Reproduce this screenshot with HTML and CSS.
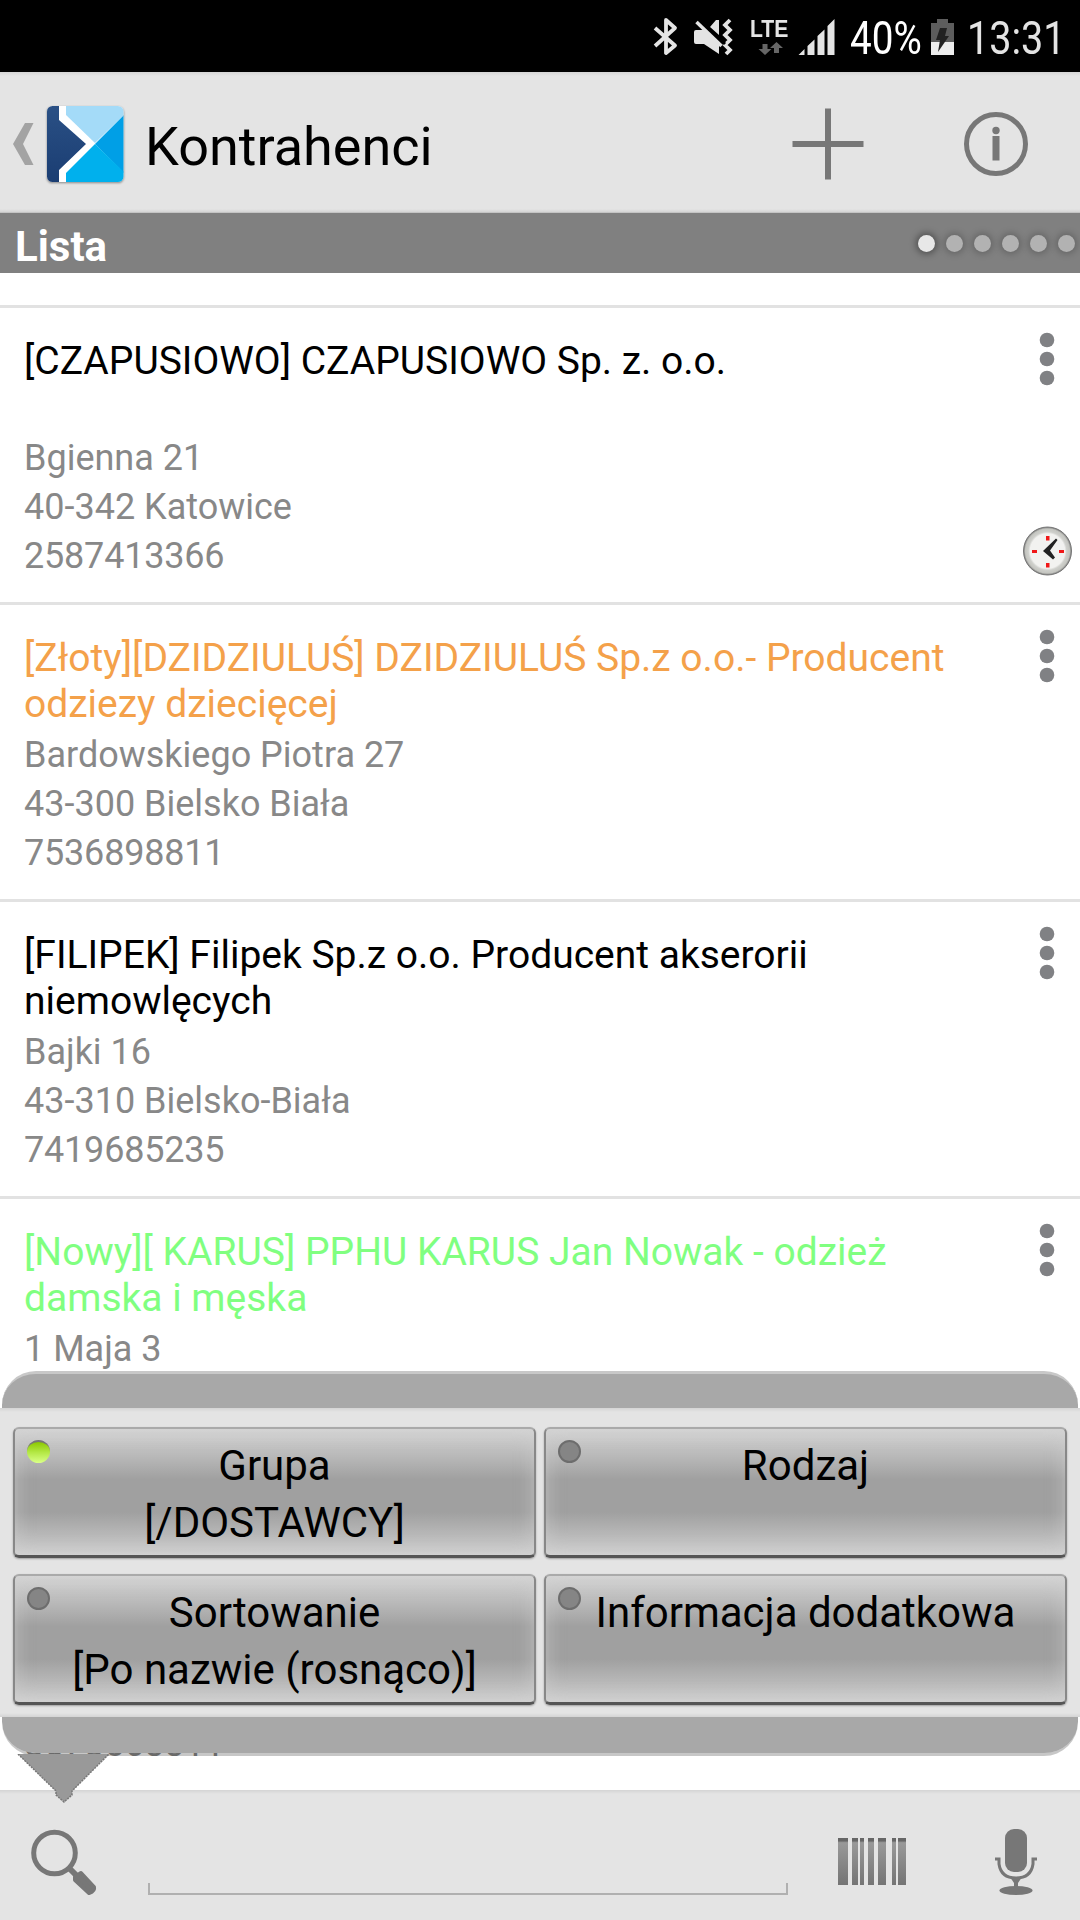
FILE: index.html
```html
<!DOCTYPE html>
<html lang="pl">
<head>
<meta charset="utf-8">
<title>Kontrahenci</title>
<link rel="stylesheet" href="styles.css">
</head>
<body>
<svg class="defs" width="0" height="0">
  <defs>
    <linearGradient id="navy" x1="0" y1="0" x2="0" y2="1"><stop offset="0" stop-color="#2a5085"/><stop offset="1" stop-color="#1a3d72"/></linearGradient>
    <linearGradient id="bar" x1="0" y1="0" x2="0" y2="1"><stop offset="0" stop-color="#666"/><stop offset=".06" stop-color="#666"/><stop offset=".1" stop-color="#999"/><stop offset="1" stop-color="#747474"/></linearGradient>
    <radialGradient id="dial"><stop offset=".72" stop-color="#f2f2f0"/><stop offset=".8" stop-color="#cfd0cc"/><stop offset=".92" stop-color="#c4c5c0"/><stop offset="1" stop-color="#777"/></radialGradient>
    <symbol id="dots" viewBox="0 0 16 54"><g fill="#808184"><circle cx="8" cy="8" r="7.3"/><circle cx="8" cy="27" r="7.3"/><circle cx="8" cy="46" r="7.3"/></g></symbol>
  </defs>
</svg>
<div class="screen">
  <div class="status">
    <svg class="status-icons" width="206" height="72" viewBox="0 0 206 72">
      <path fill="none" stroke="#e4e4e4" stroke-width="3.800" stroke-linejoin="round" d="M5 28 25 45.500 16 53V20L25 28 5 46"/>
      <path fill="none" stroke="#e4e4e4" stroke-width="3.800" d="M80 20l-5 5 5 5-5 5 5 5-5 5 5 5-4 4"/>
      <path fill="#e4e4e4" d="M44 32q0-2 2-2h9l14 12v12L54 44h-8q-2 0-2-2zM60 27l6-7h3v15z"/>
      <path stroke="#000" stroke-width="3" d="M49 19 75 44"/>
      <path stroke="#e4e4e4" stroke-width="3.500" d="M46.500 22 71.500 46"/>
      <path fill="#666" d="M112.500 44h5v5h4l-6.500 6-6.500-6h4zM124 53h5v-5h4l-6.500-6-6.500 6h4z"/>
      <path fill="#e4e4e4" d="M148.500 55l6-6v6zM157.500 46l7-6.500V55h-7zM167.500 36l7-6.500V55h-7zM177.500 26l7-7v36h-7z"/>
    </svg>
    <span class="lte">LTE</span>
    <span class="pct">40%</span>
    <svg class="battery" width="24" height="37" viewBox="0 0 24 37"><path fill="#5d5d5d" d="M0 4h6V0h11v4h6v19H0z"/><path fill="#ededed" d="M0 23h23v13H0z"/><path fill="#222" d="M9 9h7l-2 8h4L7 33l2-12H5z"/></svg>
    <span class="time">13:31</span>
  </div>
  <div class="header">
    <svg class="back" width="22" height="44" viewBox="0 0 22 44"><path fill="#a3a3a3" d="M12 1h8.500L10 22l10.500 21H12L0 22z"/></svg>
    <svg class="logo" width="78" height="78" viewBox="0 0 78 78">
      <clipPath id="tile"><rect width="76.500" height="76" rx="5.500"/></clipPath>
      <g clip-path="url(#tile)"><rect width="78" height="78" fill="#fff"/><path fill="url(#navy)" d="M0 0h12v14l27 24L12 64v14H0z"/><path fill="#a4dbf8" d="M19 0h59v8L48 37 19 9z"/><path fill="#009fe6" d="M77 9v58L48 38z"/><path fill="#00b0ed" d="M48 38 19 67v11h59V67z"/></g>
    </svg>
    <h1 class="title">Kontrahenci</h1>
    <svg class="plus" width="72" height="72" viewBox="0 0 72 72"><path stroke="#777" stroke-width="6" d="M36 .5v71M.5 36h71"/></svg>
    <svg class="info" width="66" height="66" viewBox="0 0 66 66"><circle cx="33" cy="33" r="29.500" fill="none" stroke="#777" stroke-width="5"/><circle cx="33" cy="19.500" r="3.700" fill="#777"/><path fill="#777" d="M29.500 25h7v24.500h-7z"/></svg>
  </div>
  <div class="tabbar"><span class="tab">Lista</span><div class="pager"><i class="on"></i><i></i><i></i><i></i><i></i><i></i></div></div>
  <div class="list">
    <div class="row"><div class="name">[CZAPUSIOWO] CZAPUSIOWO Sp. z. o.o.</div><div class="addr">Bgienna 21<br>40-342 Katowice<br><span class="num">2587413366</span></div><svg class="more" width="16" height="54"><use href="#dots"/></svg>
      <svg class="clock" width="49" height="50" viewBox="0 0 49 50"><circle cx="24.500" cy="25" r="24" fill="url(#dial)" stroke="#777"/><path fill="#f01818" d="M23 10h3.500v4.500H23zM23 37h3.500v4.500H23zM9 24h5v3H9zM36 24h5v3h-5z"/><path fill="#222" d="M20 25 33 12.500l1.500 1.500-7.500 10.500 5 7-2 2z"/></svg></div>
    <div class="row"><div class="name gold">[Złoty][DZIDZIULUŚ] DZIDZIULUŚ Sp.z o.o.- Producent odziezy dziecięcej</div><div class="addr">Bardowskiego Piotra 27<br>43-300 Bielsko Biała<br><span class="num">7536898811</span></div><svg class="more" width="16" height="54"><use href="#dots"/></svg></div>
    <div class="row"><div class="name">[FILIPEK] Filipek Sp.z o.o. Producent akserorii niemowlęcych</div><div class="addr">Bajki 16<br>43-310 Bielsko-Biała<br><span class="num">7419685235</span></div><svg class="more" width="16" height="54"><use href="#dots"/></svg></div>
    <div class="row"><div class="name green">[Nowy][ KARUS] PPHU KARUS Jan Nowak - odzież damska i męska</div><div class="addr">1 Maja 3</div><svg class="more" width="16" height="54"><use href="#dots"/></svg></div>
    <div class="row"><div class="name"></div><div class="addr"><br><br><span class="num">8678568811</span></div></div>
  </div>
  <div class="panel">
    <div class="cap top"></div>
    <div class="buttons">
      <div class="btn"><i class="led lit"></i>Grupa<br>[/DOSTAWCY]</div>
      <div class="btn"><i class="led"></i>Rodzaj</div>
      <div class="btn"><i class="led"></i>Sortowanie<br>[Po nazwie (rosnąco)]</div>
      <div class="btn"><i class="led"></i>Informacja dodatkowa</div>
    </div>
    <div class="cap bottom"></div>
    <svg class="pointer" width="94" height="50" viewBox="0 0 94 50"><path fill="#999" stroke="#777" stroke-width="1.500" stroke-dasharray="2 1" d="M1 0 39 37v4l8 7 8-7v-4L92 0"/></svg>
  </div>
  <div class="search">
    <svg class="lens" width="68" height="68" viewBox="0 0 68 68"><circle cx="23.500" cy="24" r="20.800" fill="none" stroke="#777" stroke-width="5"/><path stroke="#777" stroke-width="6" d="M38 39l8 8"/><path fill="#777" stroke="#777" stroke-width="4" stroke-linejoin="round" d="M44 48l6-4 13 14q1 4-5 6L44 51z"/></svg>
    <div class="field"></div>
    <svg class="barcode" width="70" height="50" viewBox="0 0 70 50"><path fill="url(#bar)" d="M0 1h10v47H0zM14 1h6v47h-6zM22 1h4v47h-4zM30 1h6v47h-6zM40 1h8v47h-8zM54 1h4v47h-4zM60 1h8v47h-8z"/></svg>
    <svg class="mic" width="42" height="68" viewBox="0 0 42 68"><rect x="10" y="0" width="22" height="43" rx="9" fill="#777"/><path fill="none" stroke="#777" stroke-width="3" d="M0 30h4v5q2 14 17 14t17-14v-5h4"/><path fill="#777" d="M15 48h12l-4 6v5h-4v-5z"/><ellipse cx="21" cy="61.500" rx="16.500" ry="4.500" fill="#777"/></svg>
  </div>
</div>
</body>
</html>
```
FILE: styles.css
```css
* { box-sizing: border-box; }
body { margin: 0; font-family: Roboto, sans-serif; background: #fff; color: #000; }
svg { display: block; flex: none; }
.defs { position: absolute; }
.screen { position: relative; width: 1080px; height: 1920px; overflow: hidden; display: flex; flex-direction: column; }
.status { position: relative; height: 72px; flex: none; background: #000; color: #e4e4e4; display: flex; padding-left: 650px; }
.lte { position: absolute; left: 750px; top: 14px; font: bold 23px/30px "Liberation Sans", sans-serif; transform-origin: left; transform: scaleX(.92); }
.status-icons { margin-right: 0; }
.pct, .time { font-size: 46px; line-height: 77px; transform-origin: left; white-space: nowrap; }
.pct { color: #fff; margin-left: -6px; width: 80px; transform: scaleX(.84); }
.battery { margin: 19px 0 0 1px; }
.time { margin-left: 12px; transform: scaleX(.86); }
.header { height: 141px; flex: none; background: linear-gradient(#d6d6d6, #e4e4e4 4px, #e4e4e4 137px, #d4d4d4 140px, #b4b4b4); display: flex; padding-left: 13px; }
.back { margin-top: 50px; }
.logo { margin: 34px 0 0 12px; filter: drop-shadow(0 1px 1px rgba(0,0,0,.4)); }
.title { margin: 0 0 0 20px; width: 647px; font-size: 54px; font-weight: 400; line-height: 149px; }
.plus { margin: 36px 0 0 0; }
.info { margin: 39px 0 0 99px; }
.tabbar { height: 60px; flex: none; background: #808080; display: flex; justify-content: space-between; padding-left: 15px; }
.tab { font-size: 42px; font-weight: 700; line-height: 68px; color: #fff; }
.pager { display: flex; gap: 11px; padding: 22px 5.5px 0 0; }
.pager i { width: 17px; height: 17px; border-radius: 50%; background: #b2b2b2; box-shadow: 0 0 7px 2px rgba(0,0,0,.22); }
.pager .on { background: #e8e8e8; box-shadow: 0 0 7px 2px rgba(0,0,0,.4); }
.list { height: 1517px; flex: none; overflow: hidden; padding-top: 32px; }
.row { position: relative; height: 297px; border-top: 3px solid #e2e2e2; padding: 30px 0 0 24px; }
.name { width: 940px; height: 94px; font-size: 39px; line-height: 46px; }
.addr { padding-top: 2px; font-size: 36px; line-height: 49px; color: #888; }
.num { letter-spacing: -.2px; }
.gold { color: #f4a14a; }
.green { color: #80ff80; }
.more { position: absolute; left: 1039px; top: 24px; }
.clock { position: absolute; left: 1023px; top: 218px; }
.panel { position: absolute; left: 0; top: 1371px; width: 1080px; height: 385px; z-index: 2; }
.cap { margin: 0 2px; background: #a8a8a8; }
.top { height: 37px; border-top: 3px solid #c8c8c8; border-radius: 34px 34px 0 0; }
.bottom { height: 39px; background-clip: padding-box; border-bottom: 3px solid rgba(0,0,0,.22); border-radius: 0 0 34px 34px; }
.buttons { height: 309px; background: linear-gradient(#d4d4d4, #e4e4e4 4px, #e4e4e4 305px, #d4d4d4); display: grid; grid-template-columns: 523px 523px; grid-template-rows: 131px 131px; gap: 16px 8px; padding: 19px 13px; }
.btn { position: relative; padding-top: 8px; text-align: center; font-size: 42px; line-height: 57px; border: 2px solid #888; border-top-color: #aaa; border-bottom: 3px solid #555; border-radius: 6px; background: linear-gradient(#d4d4d4, #b8b8b8 22%, #a0a0a0 40%, #a0a0a0 66%, #b4b4b4 81%, #d0d0d0); box-shadow: inset 0 0 18px rgba(210,210,210,.6), 0 1px 2px rgba(0,0,0,.3); }
.led { position: absolute; left: 12px; top: 11px; width: 23px; height: 23px; border-radius: 50%; background: #858585; border: 2px solid #6d6d6d; }
.lit { border: 0; border-top: 2px solid #777; background: linear-gradient(#8bc800, #b4e846 50%, #d9ff88); }
.pointer { position: absolute; left: 17px; top: 383px; }
.search { height: 130px; flex: none; background: linear-gradient(#d4d4d4, #e4e4e4 4px); display: flex; padding-left: 31px; }
.lens { margin-top: 39px; }
.field { margin: 93px 0 0 49px; width: 640px; height: 12px; border: 2px solid #b0b0b0; border-top: 0; }
.barcode { margin: 47px 0 0 50px; }
.mic { margin: 39px 0 0 87px; }
```
